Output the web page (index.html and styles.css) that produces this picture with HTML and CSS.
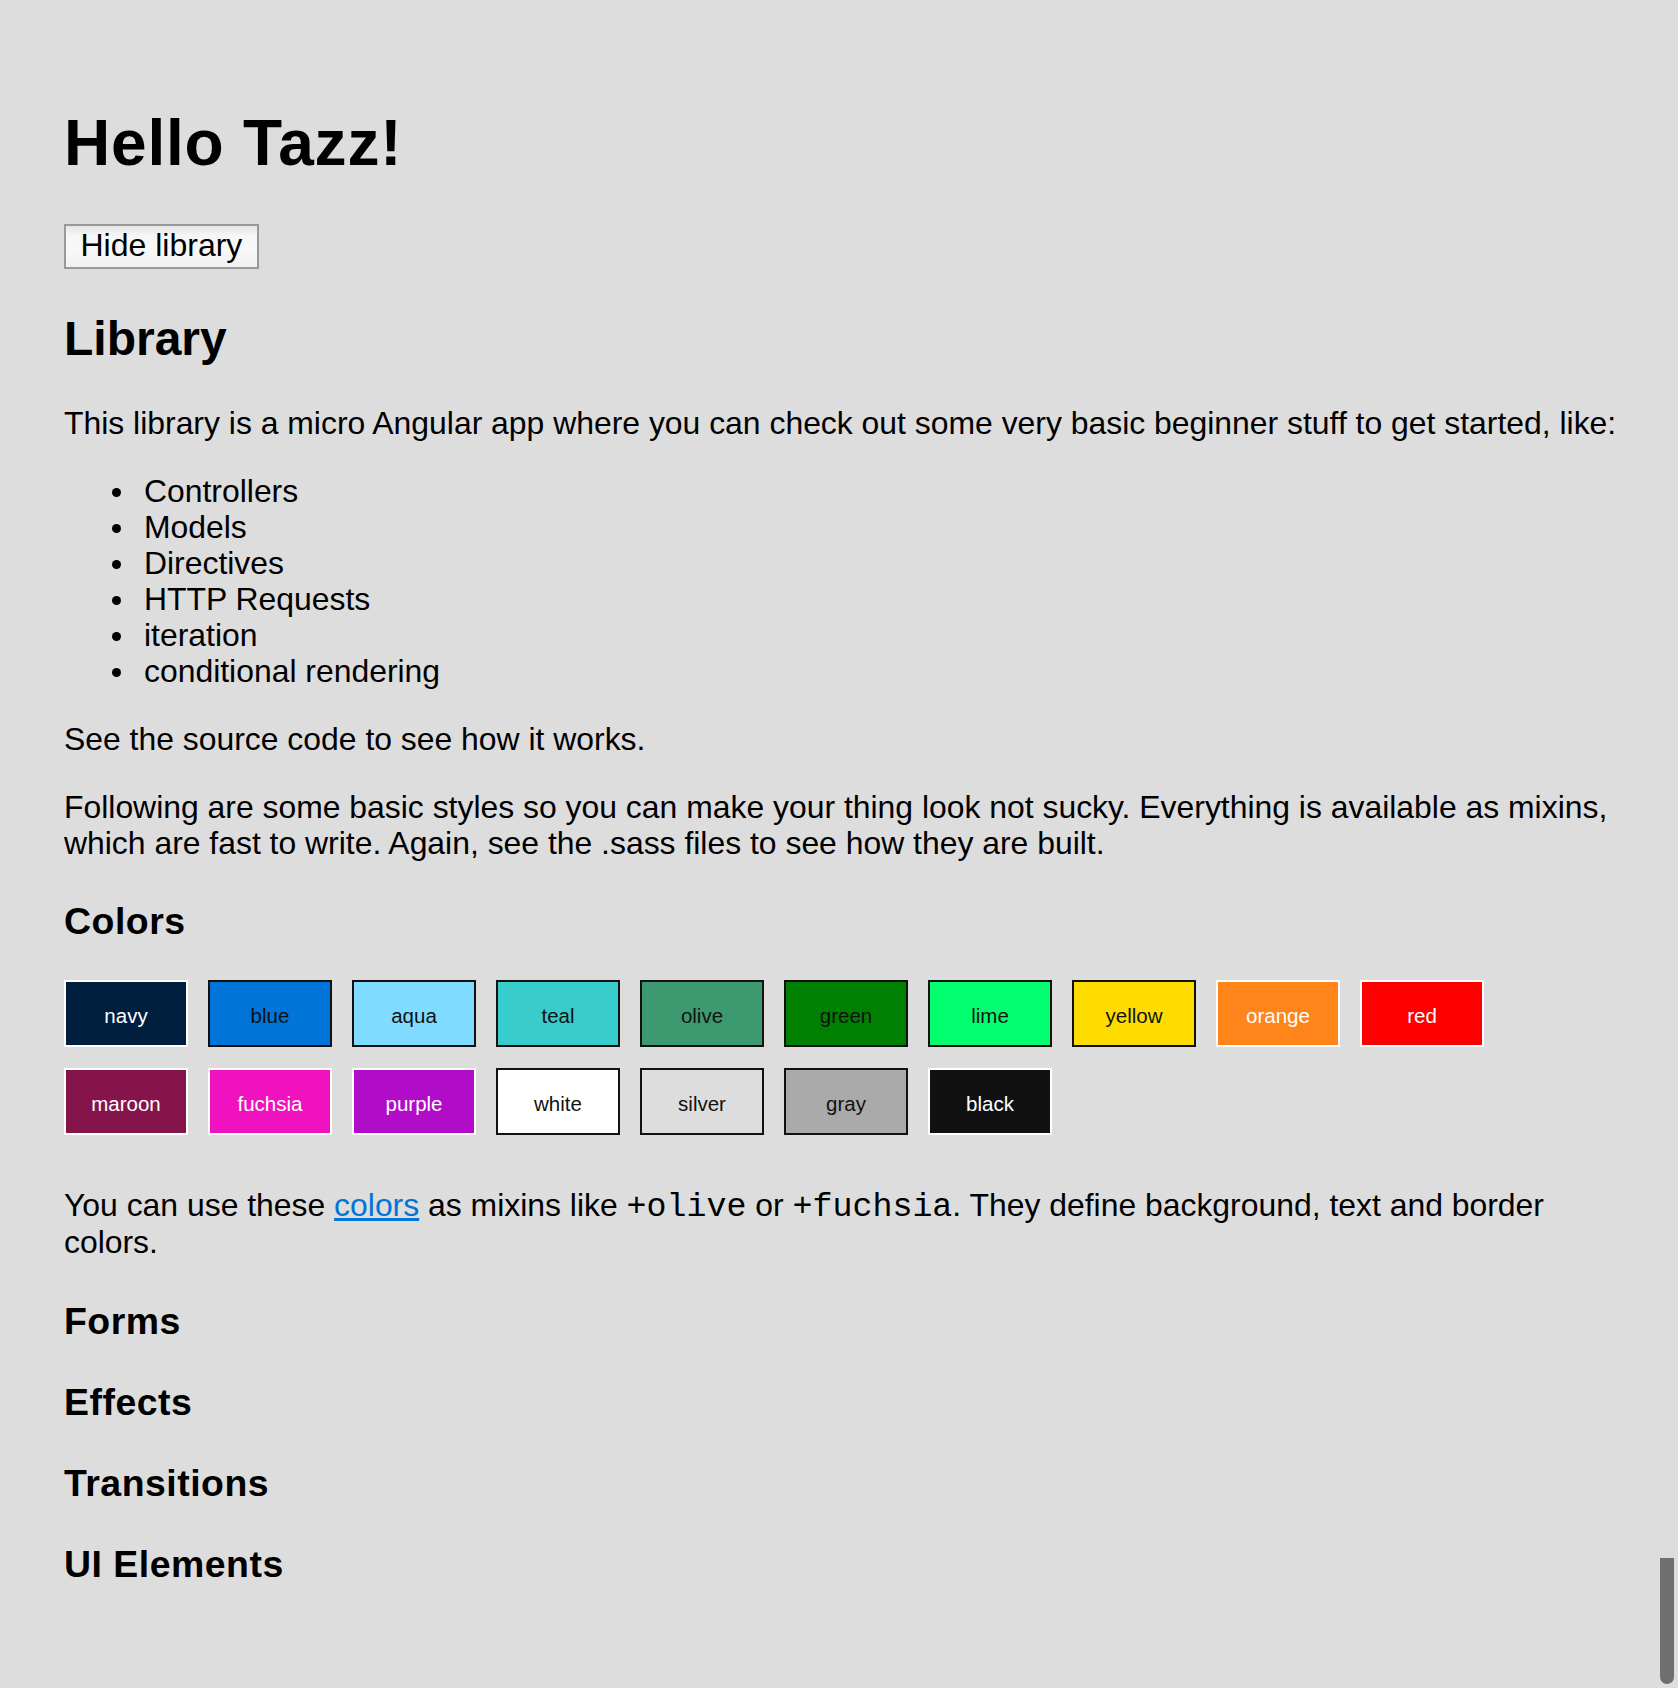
FILE: index.html
```html
<!DOCTYPE html>
<html lang="en">
<head>
<meta charset="utf-8">
<title>Hello Tazz!</title>
<link rel="stylesheet" href="styles.css">
</head>
<body>
<main class="page">
  <h1 class="title">Hello Tazz!</h1>
  <div class="actions"><button class="btn" type="button">Hide library</button></div>
  <section class="library">
    <h2 class="section-title">Library</h2>
    <p class="text">This library is a micro Angular app where you can check out some very basic beginner stuff to get started, like:</p>
    <ul class="features">
      <li class="feature">Controllers</li>
      <li class="feature">Models</li>
      <li class="feature">Directives</li>
      <li class="feature">HTTP Requests</li>
      <li class="feature">iteration</li>
      <li class="feature">conditional rendering</li>
    </ul>
    <p class="text">See the source code to see how it works.</p>
    <p class="text">Following are some basic styles so you can make your thing look not sucky. Everything is available as mixins,<br>which are fast to write. Again, see the .sass files to see how they are built.</p>
    <h3 class="sub-title colors-title">Colors</h3>
    <div class="swatches">
      <div class="swatch navy">navy</div>
      <div class="swatch blue">blue</div>
      <div class="swatch aqua">aqua</div>
      <div class="swatch teal">teal</div>
      <div class="swatch olive">olive</div>
      <div class="swatch green">green</div>
      <div class="swatch lime">lime</div>
      <div class="swatch yellow">yellow</div>
      <div class="swatch orange">orange</div>
      <div class="swatch red">red</div>
      <div class="swatch maroon">maroon</div>
      <div class="swatch fuchsia">fuchsia</div>
      <div class="swatch purple">purple</div>
      <div class="swatch white">white</div>
      <div class="swatch silver">silver</div>
      <div class="swatch gray">gray</div>
      <div class="swatch black">black</div>
    </div>
    <p class="text">You can use these <a class="link" href="#">colors</a> as mixins like <code class="code">+olive</code> or <code class="code">+fuchsia</code>. They define background, text and border<br>colors.</p>
    <h3 class="sub-title forms">Forms</h3>
    <h3 class="sub-title">Effects</h3>
    <h3 class="sub-title">Transitions</h3>
    <h3 class="sub-title">UI Elements</h3>
  </section>
</main>
<div class="scrollbar"></div>
</body>
</html>
```
FILE: styles.css
```css
html {
  overflow: hidden;
  background: #dddddd;
}

body {
  margin: 0;
  padding: 64px 52px 0 64px;
  background: #dddddd;
  color: #000000;
  font-family: "Liberation Sans", Arial, Helvetica, sans-serif;
  font-size: 31.9px;
  line-height: 36px;
}

.title {
  font-size: 64px;
  line-height: 73.5px;
  font-weight: bold;
  letter-spacing: 0.8px;
  margin: 43px 0;
}

.actions {
  display: flex;
}

.btn {
  box-sizing: border-box;
  height: 45px;
  padding: 3px 14.5px 5px;
  border: 2px solid #999999;
  border-radius: 0;
  background: linear-gradient(#e6e6e6 0%, #f6f6f6 25%, #f8f8f8 60%, #f0f0f0 100%);
  color: #000000;
  font-family: "Liberation Sans", Arial, Helvetica, sans-serif;
  font-size: 32px;
  line-height: 31px;
}

.section-title {
  font-size: 48px;
  line-height: 55.2px;
  font-weight: bold;
  margin: 42px 0 39px;
}

.text {
  margin: 32px 0;
}

.features {
  margin: 32px 0;
  padding-left: 80px;
  list-style: none;
}

.feature::before {
  content: "";
  display: inline-block;
  width: 9px;
  height: 9px;
  border-radius: 50%;
  background: #000000;
  margin: 0 23.5px 5px -32.5px;
}

.sub-title {
  font-size: 37.44px;
  line-height: 43px;
  font-weight: bold;
  letter-spacing: 0.5px;
  margin: 38px 0;
}

.sub-title.colors-title {
  margin: 39px 0 37px;
}

.sub-title.forms {
  margin-top: 40px;
}

.swatches {
  display: flex;
  flex-wrap: wrap;
  column-gap: 20px;
  row-gap: 21px;
  margin-bottom: 52px;
}

.swatch {
  box-sizing: border-box;
  width: 124px;
  height: 67px;
  padding-top: 6px;
  border: 2px solid #111111;
  display: flex;
  align-items: center;
  justify-content: center;
  font-size: 20.5px;
  line-height: 23.5px;
  color: #111111;
}

.navy { background: #001f3f; }
.blue { background: #0074d9; }
.aqua { background: #7fdbff; }
.teal { background: #39cccc; }
.olive { background: #3d9970; }
.green { background: #008000; }
.lime { background: #01ff70; }
.yellow { background: #ffdc00; }
.orange { background: #ff851b; }
.red { background: #ff0000; }
.maroon { background: #85144b; }
.fuchsia { background: #f012be; }
.purple { background: #b10dc9; }
.white { background: #ffffff; }
.silver { background: #dddddd; }
.gray { background: #aaaaaa; }
.black { background: #111111; }

.navy, .orange, .red, .maroon, .fuchsia, .purple, .black {
  border-color: #ffffff;
  color: #ffffff;
}

.link {
  color: #0074d9;
  text-decoration: underline;
}

.code {
  font-family: "Liberation Mono", "Courier New", monospace;
  font-size: 33.3px;
  line-height: 1;
}

.scrollbar {
  position: fixed;
  right: 4px;
  bottom: 4px;
  width: 14px;
  height: 126px;
  background: #6f6f6f;
  border-radius: 0 0 7px 7px;
}
```
